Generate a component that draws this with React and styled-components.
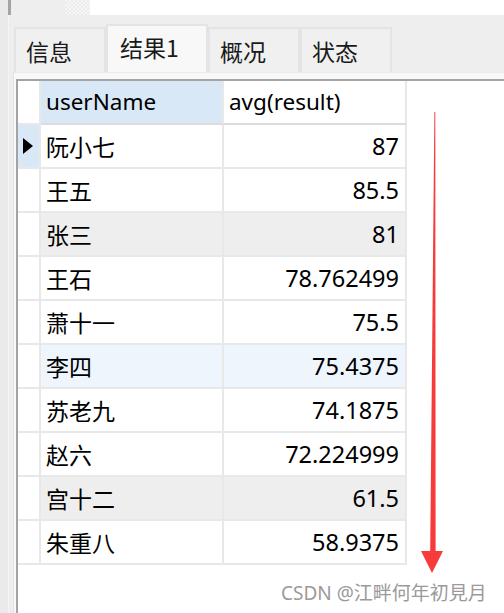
import React from 'react';
import styled, { createGlobalStyle } from 'styled-components';

const GlobalStyle = createGlobalStyle`
  html, body {
    margin: 0;
    padding: 0;
    background: #ffffff;
  }
  body {
    font-family: "Noto Sans", "Noto Sans CJK SC", sans-serif;
  }
`;

const tabs = ['信息', '结果1', '概况', '状态'];

const rows = [
  { name: '阮小七', avg: '87', current: true },
  { name: '王五', avg: '85.5' },
  { name: '张三', avg: '81', tone: 'gray' },
  { name: '王石', avg: '78.762499' },
  { name: '萧十一', avg: '75.5' },
  { name: '李四', avg: '75.4375', tone: 'blue' },
  { name: '苏老九', avg: '74.1875' },
  { name: '赵六', avg: '72.224999' },
  { name: '宫十二', avg: '61.5', tone: 'gray' },
  { name: '朱重八', avg: '58.9375' },
];

const rowBg = {
  gray: '#eeeeee',
  blue: '#eef5fd',
};

const App = () => {
  return (
    <>
      <GlobalStyle />
      <Page>
        <TopStrip>
          <Gutter />
          <StripEdge />
          <StripGray />
          <Checker />
          <StripWhite />
        </TopStrip>
        <Main>
          <Gutter />
          <Panel>
            <TabBar>
              {tabs.map((t) => (
                <Tab key={t} $active={t === '结果1'}>
                  {t}
                </Tab>
              ))}
            </TabBar>
            <Content>
              <Grid>
                <Row>
                  <HeadMark />
                  <HeadCell $selected>userName</HeadCell>
                  <HeadCell>avg(result)</HeadCell>
                </Row>
                {rows.map((r) => (
                  <Row key={r.name} $bg={rowBg[r.tone]}>
                    <Mark $current={r.current}>{r.current && <Pointer />}</Mark>
                    <NameCell>{r.name}</NameCell>
                    <NumCell>{r.avg}</NumCell>
                  </Row>
                ))}
              </Grid>
            </Content>
          </Panel>
        </Main>
        <Arrow width="504" height="613" viewBox="0 0 504 613">
          <polygon
            points="434.4,112 435.3,112 435.6,551 443,551 432,573 421,551 430.2,551"
            fill="#f73a3a"
          />
        </Arrow>
        <Watermark>CSDN @江畔何年初見月</Watermark>
      </Page>
    </>
  );
};

const Page = styled.div`
  position: relative;
  width: 504px;
  height: 613px;
  display: flex;
  flex-direction: column;
  overflow: hidden;
  background: #ffffff;
`;

const TopStrip = styled.div`
  display: flex;
  height: 15px;
  flex: none;
`;

const Gutter = styled.div`
  width: 8px;
  flex: none;
  background: #eaeaea;
  border-right: 1px solid #f4f4f4;
`;

const StripEdge = styled.div`
  width: 3px;
  background: #a4a4a4;
  margin-left: -1px;
`;

const StripGray = styled.div`
  width: 54px;
  background: #eeeeee;
`;

const Checker = styled.div`
  width: 25px;
  background-color: #f6f6f6;
  background-image: linear-gradient(45deg, #ececec 25%, transparent 25%, transparent 75%, #ececec 75%),
    linear-gradient(45deg, #ececec 25%, transparent 25%, transparent 75%, #ececec 75%);
  background-size: 4px 4px;
  background-position: 0 0, 2px 2px;
`;

const StripWhite = styled.div`
  flex: 1;
  background: #ffffff;
`;

const Main = styled.div`
  flex: 1;
  display: flex;
  min-height: 0;
`;

const Panel = styled.div`
  flex: 1;
  display: flex;
  flex-direction: column;
  background: #eeeeee;
  padding-left: 4px;
`;

const TabBar = styled.div`
  display: flex;
  align-items: flex-end;
  height: 57px;
  padding-left: 1px;
`;

const Tab = styled.div`
  box-sizing: border-box;
  width: ${(p) => (p.$active ? '102px' : '92px')};
  height: ${(p) => (p.$active ? '48px' : '45px')};
  display: flex;
  align-items: center;
  padding-left: ${(p) => (p.$active ? '12px' : '10px')};
  padding-bottom: ${(p) => (p.$active ? '5px' : '0')};
  background: ${(p) => (p.$active ? '#f8f8f8' : '#f0f0f0')};
  border: 2px solid #e4e4e4;
  border-bottom: none;
  font-family: "Noto Sans CJK SC", sans-serif;
  font-size: 23px;
  color: #1a1a1a;
`;

const Content = styled.div`
  flex: 1;
  background: #f8f8f8;
  border-left: 1px solid #e2e2e2;
  border-top: 1px solid #eaeaea;
  padding: 6px 0 0 2px;
  display: flex;
  flex-direction: column;
`;

const Grid = styled.div`
  flex: 1;
  background: #ffffff;
  border-top: 2px solid #a3a3a3;
  border-left: 2px solid #a3a3a3;
`;

const Row = styled.div`
  display: grid;
  grid-template-columns: 23px 183px 183px;
  width: max-content;
  height: 44px;
  background: ${(p) => p.$bg || '#ffffff'};
`;

const Cell = styled.div`
  box-sizing: border-box;
  display: flex;
  align-items: center;
  border-right: 2px solid #e8e8e8;
  border-bottom: 2px solid #e8e8e8;
  padding: 0 6px;
  color: #000000;
  white-space: nowrap;
`;

const HeadMark = styled(Cell)`
  background: #ffffff;
`;

const HeadCell = styled(Cell)`
  background: ${(p) => (p.$selected ? '#d9e8f7' : '#ffffff')};
  font-family: "Noto Sans", "Noto Sans CJK SC", sans-serif;
  font-size: 22.5px;
  padding-left: 5px;
  padding-bottom: 2px;
  border-bottom-color: #dcdcdc;
`;

const Mark = styled(Cell)`
  background: ${(p) => (p.$current ? '#d9e8f7' : '#ffffff')};
  padding: 0;
  justify-content: center;
`;

const Pointer = styled.span`
  width: 0;
  height: 0;
  border-top: 8px solid transparent;
  border-bottom: 8px solid transparent;
  border-left: 10px solid #000000;
  margin-left: -2px;
`;

const NameCell = styled(Cell)`
  font-family: "Noto Sans CJK SC", sans-serif;
  font-size: 23px;
  padding-left: 5px;
`;

const NumCell = styled(Cell)`
  justify-content: flex-end;
  font-family: "Noto Sans", "Noto Sans CJK SC", sans-serif;
  font-size: 23.5px;
  padding-right: 6px;
`;

const Arrow = styled.svg`
  position: absolute;
  left: 0;
  top: 0;
  pointer-events: none;
`;

const Watermark = styled.div`
  position: absolute;
  left: 281px;
  top: 578px;
  font-family: "Noto Sans", "Noto Sans CJK SC", sans-serif;
  font-size: 19px;
  color: #9a9a9a;
  white-space: nowrap;
`;

export default App;
